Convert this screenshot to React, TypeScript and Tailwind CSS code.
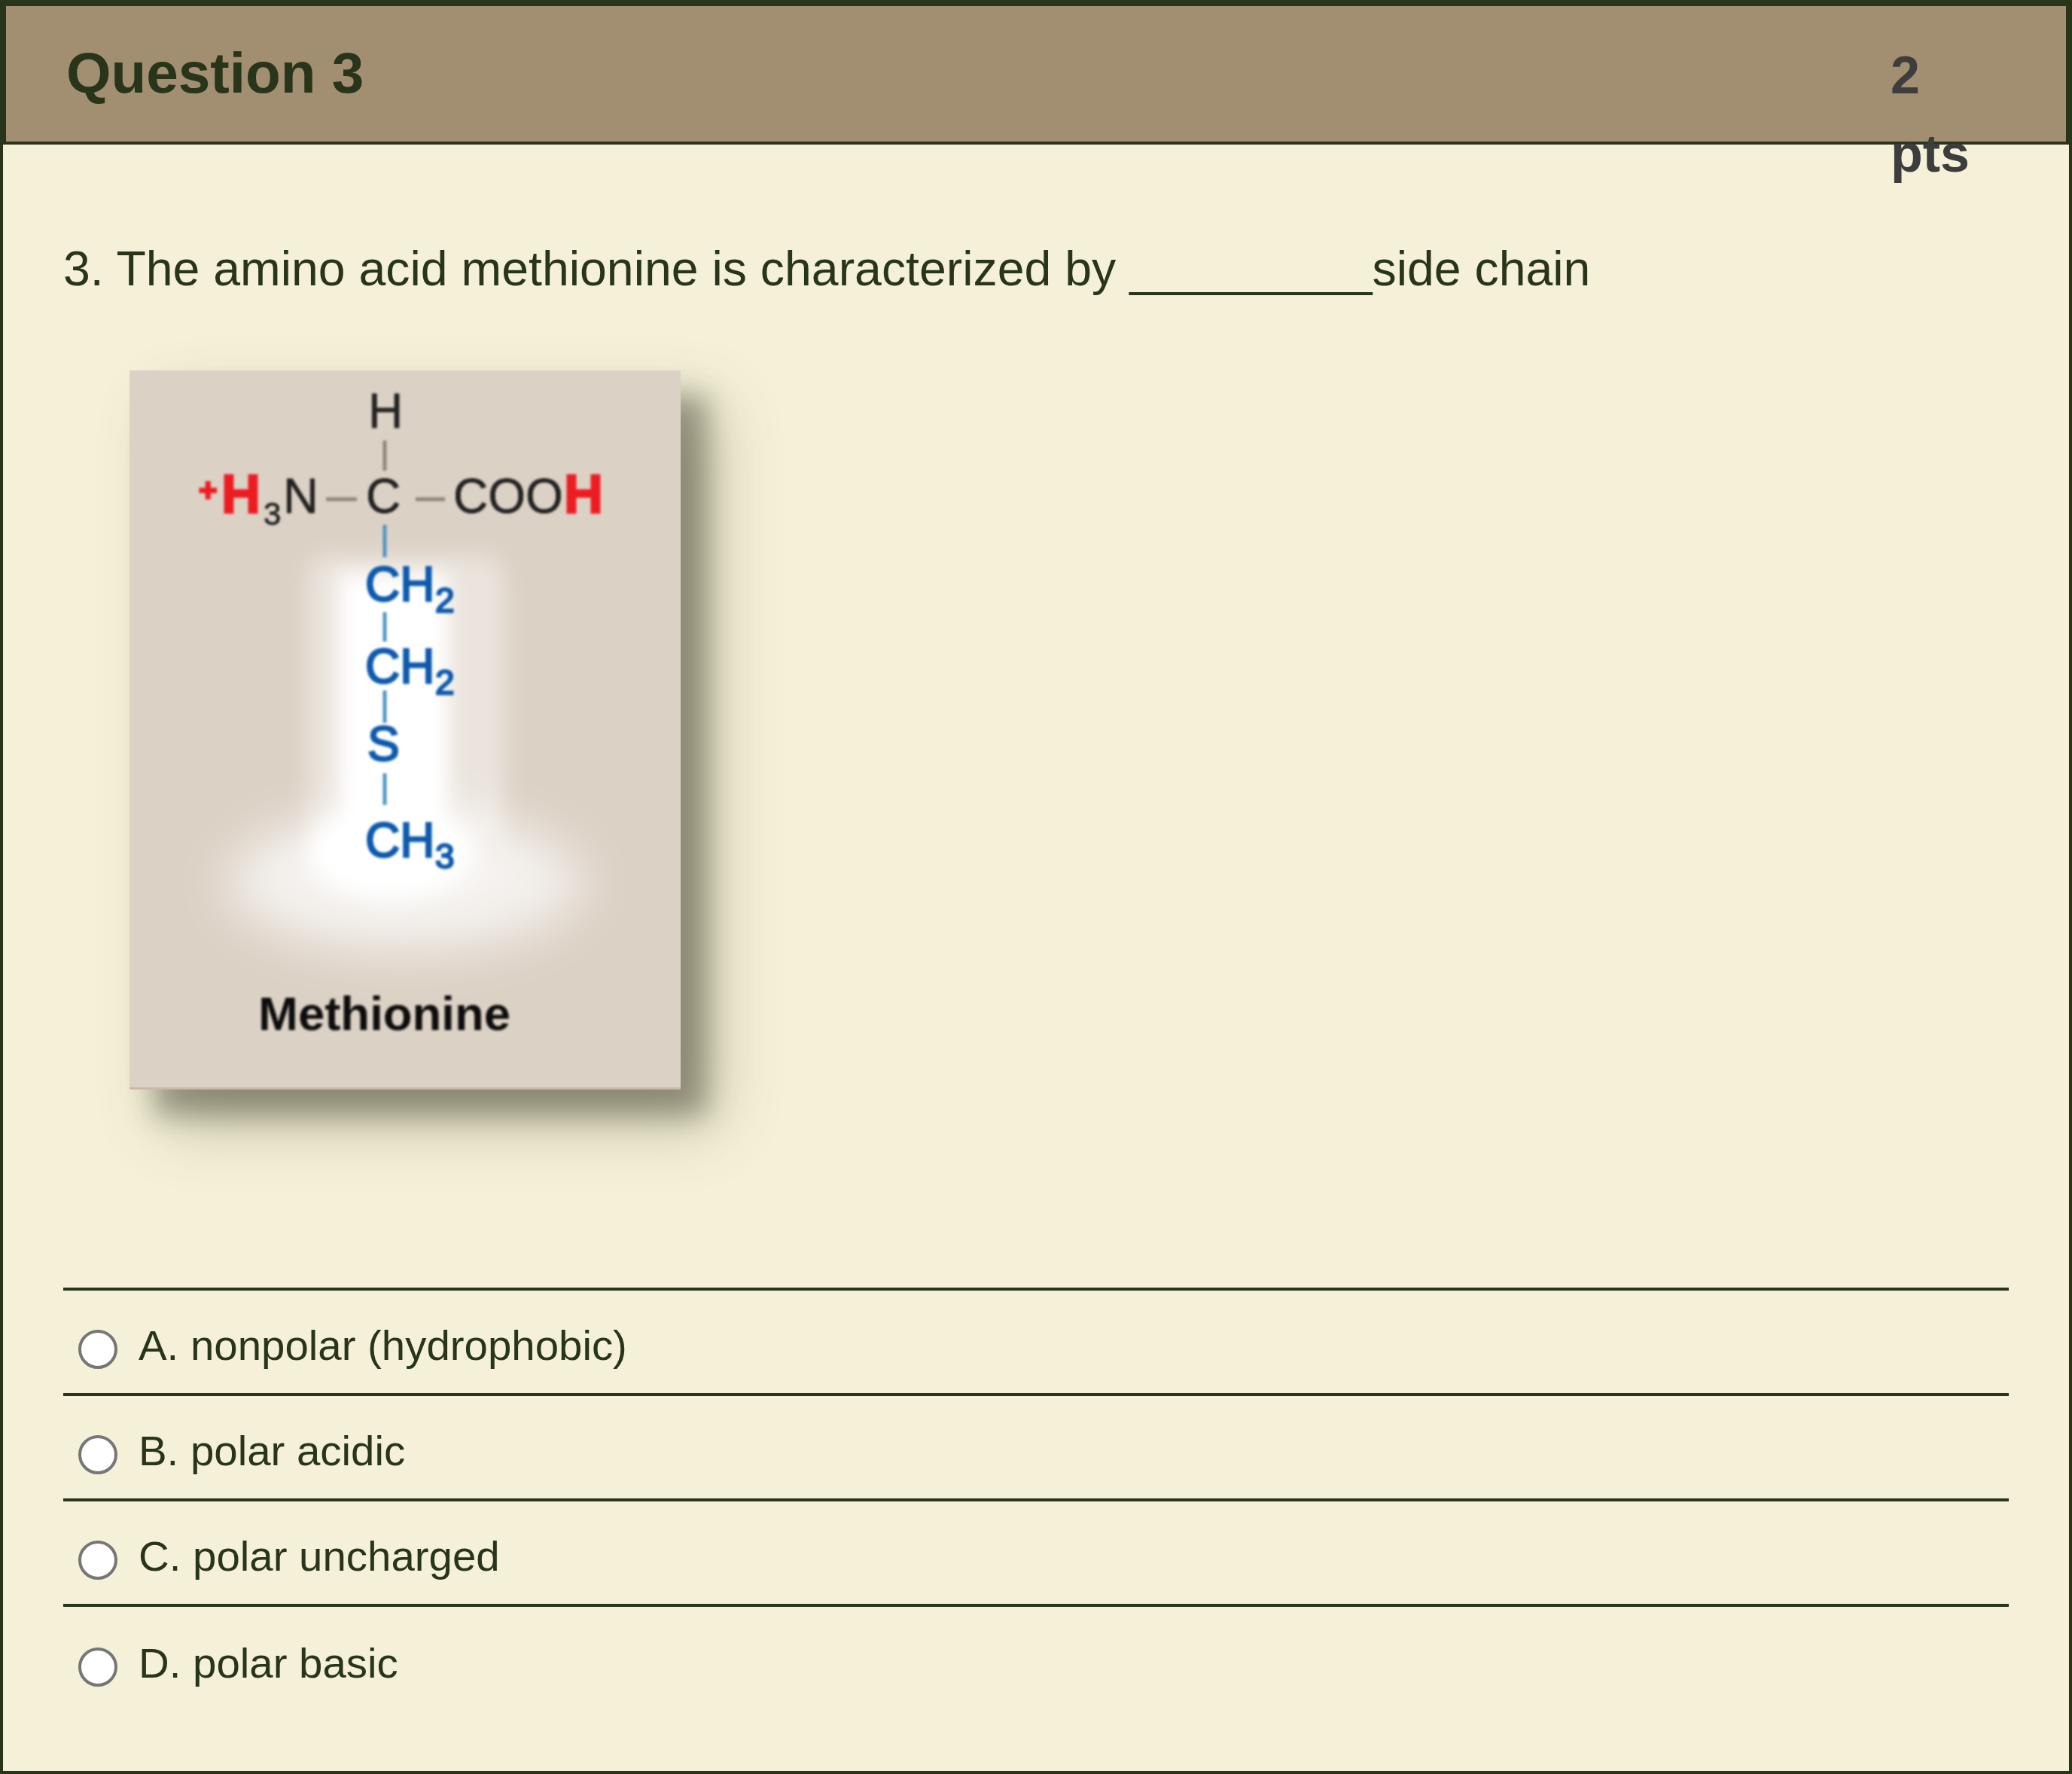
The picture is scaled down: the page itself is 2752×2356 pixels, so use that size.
export default function App() {
  const options = ["A. nonpolar (hydrophobic)", "B. polar acidic", "C. polar uncharged", "D. polar basic"];
  return (
    <div className="h-[2356px] w-full border-4 border-[#29351a] bg-[#f5f1d9] font-['Liberation_Sans',Arial,sans-serif] text-[#29351a]">
      <header className="flex h-[188px] items-start justify-between border-4 border-[#29351a] bg-[#a28e70]">
        <h2 className="mt-[44px] ml-[80px] text-[76.5px] leading-[90px] font-bold">Question 3</h2>
        <div className="mt-[40px] mr-[121px] w-[112px] text-[70px] leading-[104px] font-bold text-[#3d3d3d]">2 pts</div>
      </header>
      <main className="px-[80px] pt-[128px]">
        <p className="text-[64.4px] leading-[74px]">3. The amino acid methionine is characterized by _________side chain</p>
        <div className="mt-[98px] ml-[88px] h-[955px] w-[732px] bg-[#dcd1c5] shadow-[34px_34px_34px_rgba(50,50,40,0.4),46px_46px_80px_rgba(80,80,30,0.3)]">
          <svg viewBox="172 492 732 955" className="block h-full w-full font-['Liberation_Sans',Arial,sans-serif]">
            <defs>
              <filter id="soft" x="-20%" y="-20%" width="140%" height="140%"><feGaussianBlur stdDeviation="1.6" /></filter>
              <filter id="glow1" x="-50%" y="-50%" width="200%" height="200%"><feGaussianBlur stdDeviation="13" /></filter>
              <filter id="glow2" x="-50%" y="-50%" width="200%" height="200%"><feGaussianBlur stdDeviation="30" /></filter>
              <filter id="glow3" x="-50%" y="-50%" width="200%" height="200%"><feGaussianBlur stdDeviation="14" /></filter>
            </defs>
            <g filter="url(#glow2)" fill="#ffffff">
              <ellipse cx="538" cy="1172" rx="240" ry="96" opacity="0.6" />
              <ellipse cx="530" cy="1150" rx="170" ry="70" opacity="0.4" />
            </g>
            <g filter="url(#glow3)" fill="#ffffff">
              <rect x="408" y="738" width="262" height="380" rx="30" opacity="0.42" />
            </g>
            <g filter="url(#glow1)" fill="#ffffff">
              <rect x="450" y="762" width="146" height="370" />
              <ellipse cx="520" cy="1132" rx="110" ry="62" />
            </g>
            <rect x="172" y="1444" width="732" height="3" fill="#c8b9ac" />
            <g filter="url(#soft)">
              <g fill="#222222" stroke="#222222" strokeWidth="0.8" fontSize="64">
                <text x="489" y="568">H</text>
                <text x="376" y="681" fontSize="65">N</text>
                <text x="350" y="697" fontSize="42">3</text>
                <text x="486" y="681">C</text>
                <text x="602" y="681">COO</text>
              </g>
              <g fill="#ed1c24" stroke="#ed1c24" strokeWidth="2.5" fontWeight="700">
                <text x="264" y="665" fontSize="42">+</text>
                <text x="294" y="681" fontSize="72">H</text>
                <text x="749" y="681" fontSize="72">H</text>
              </g>
              <g stroke="#8d887c" strokeWidth="5">
                <line x1="511" y1="585" x2="511" y2="625" />
                <line x1="433" y1="663" x2="474" y2="663" />
                <line x1="552" y1="663" x2="591" y2="663" />
              </g>
              <g stroke="#4f94c4" strokeWidth="5">
                <line x1="511" y1="697" x2="511" y2="740" />
                <line x1="511" y1="813" x2="511" y2="852" />
                <line x1="511" y1="917" x2="511" y2="960" />
                <line x1="511" y1="1027" x2="511" y2="1069" />
              </g>
              <g fill="#0f5aad" fontSize="64" stroke="#0f5aad" strokeWidth="2.4">
                <text x="485" y="798">CH</text>
                <text x="578" y="813" fontSize="46">2</text>
                <text x="485" y="907">CH</text>
                <text x="578" y="922" fontSize="46">2</text>
                <text x="488" y="1010">S</text>
                <text x="485" y="1138">CH</text>
                <text x="578" y="1153" fontSize="46">3</text>
              </g>
              <text x="343" y="1368" fontSize="63.5" fontWeight="700" fill="#111111">Methionine</text>
            </g>
          </svg>
        </div>
        <ul className="mt-[263px] border-t-4 border-[#29351a]">
          {options.map((o, i) => (
            <li key={o} className={`flex h-[140px] items-center pl-[20px] ${i < 3 ? "border-b-4 border-[#29351a]" : ""}`}>
              <span className="mt-[20px] h-[52px] w-[52px] shrink-0 rounded-full border-4 border-[#767676] bg-white" />
              <span className="mt-[10px] ml-[28px] text-[56.4px] leading-[64px]">{o}</span>
            </li>
          ))}
        </ul>
      </main>
    </div>
  );
}
